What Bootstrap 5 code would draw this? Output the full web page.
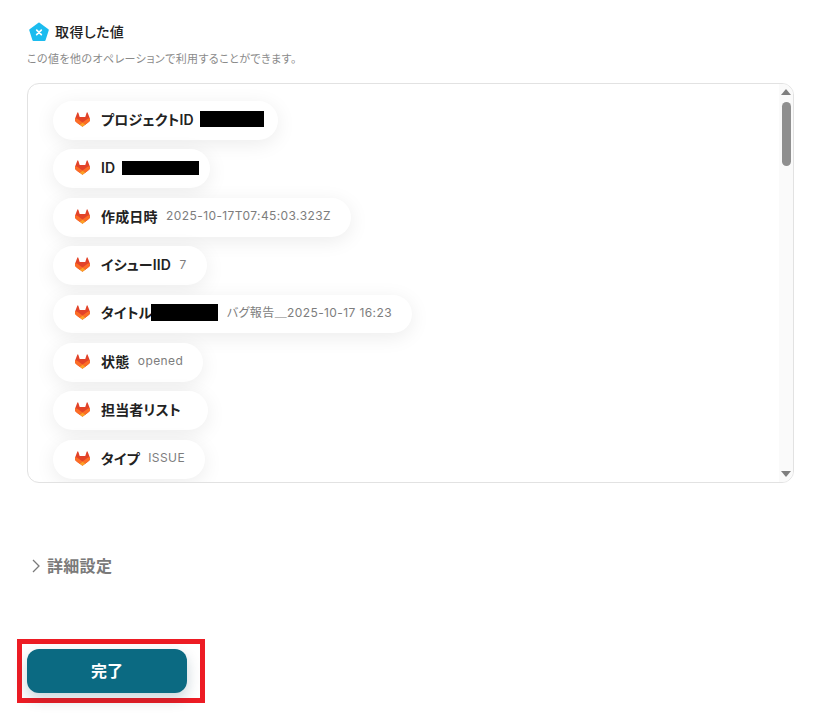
<!DOCTYPE html>
<html lang="ja">
<head>
    <title>取得した値</title>
    <link rel="stylesheet" href="https://cdn.jsdelivr.net/npm/bootstrap@5.3.0/dist/css/bootstrap.min.css">
    <style>
        body { font-family: Inter, "Noto Sans CJK JP", sans-serif; color: #2b2b2b; background: #fff; overflow: hidden; font-feature-settings: "palt"; }
        .page-wrap { width: 826px; height: 717px; padding: 21px 32px 0 27px; }
        .head-row { height: 21px; margin-left: 2px; gap: 6px; }
        .head-title { font-size: 14px; font-weight: 500; letter-spacing: .4px; color: #222; }
        .head-sub { font-size: 11px; letter-spacing: .42px; color: #8a8a8a; margin-top: 9px; line-height: 16px; }
        .value-box { height: 400px; margin-top: 16px; border: 1px solid #e2e2e2; border-radius: 12px; overflow: hidden; }
        .pill-list { padding: 17px 0 0 25px; gap: 9.6px; }
        .out-pill { height: 38.8px; padding: 0 20px 2px 22px; background: #fff; box-shadow: 0 4px 20px rgba(0,0,0,.08); }
        .out-name { font-size: 14px; font-weight: 600; letter-spacing: .15px; color: #222; margin-left: 11px; white-space: nowrap; }
        .out-val { font-size: 12px; letter-spacing: .4px; color: #7d7d7d; margin-left: 8.5px; white-space: nowrap; }
        .no-val { margin-right: 7px; }
        .black-bar { display: inline-block; background: #000; }
        .bar-a { width: 64px; height: 16px; margin: 0 -6px 0 6px; }
        .bar-b { width: 77px; height: 14px; margin: 0 -9px 0 7px; }
        .bar-c { width: 67px; height: 17px; margin-left: -1px; }
        .fake-scroll { width: 14px; background: #fafafa; padding-top: 5px; }
        .arrow-up { border: 5px solid transparent; border-top: 0; border-bottom: 6px solid #7f7f7f; }
        .arrow-down { border: 5px solid transparent; border-bottom: 0; border-top: 6px solid #7f7f7f; margin-bottom: 5px; }
        .scroll-thumb { width: 9px; height: 64px; margin-top: 7px; background: #8f8f8f; border-radius: 5px; }
        .more-row { margin: 72px 0 0 4px; height: 22px; gap: 6px; font-size: 16px; font-weight: 600; letter-spacing: .3px; color: #7a7a7a; }
        .mark-frame { width: 188px; height: 64px; margin: 62px 0 0 -10px; padding: 5px 13px 5px 5px; border: 5px solid #ed1c24; }
        .done-btn { width: 160px; height: 44px; padding: 0; background: #0b6a82; border-radius: 12px; color: #fff; font-size: 16px; font-weight: 700; box-shadow: 0 6px 14px rgba(11,60,80,.22); }
    </style>
</head>
<body>
    <svg width="0" height="0" class="d-block">
        <defs>
            <g id="tanuki">
                <path fill="#E24329" d="m24.507 9.5-.034-.09L21.082.562a.896.896 0 0 0-1.694.091l-2.29 7.01H7.825L5.535.653a.898.898 0 0 0-1.694-.09L.451 9.411.416 9.5a6.297 6.297 0 0 0 2.09 7.278l.012.01.03.022 5.16 3.867 2.56 1.935 1.554 1.176a1.051 1.051 0 0 0 1.268 0l1.555-1.176 2.56-1.935 5.197-3.89.014-.01A6.297 6.297 0 0 0 24.507 9.5Z"/>
                <path fill="#FC6D26" d="m24.507 9.5-.034-.09a11.44 11.44 0 0 0-4.56 2.051l-7.447 5.632 4.742 3.584 5.197-3.89.014-.01A6.297 6.297 0 0 0 24.507 9.5Z"/>
                <path fill="#FCA326" d="m7.707 20.677 2.56 1.935 1.555 1.176a1.051 1.051 0 0 0 1.268 0l1.555-1.176 2.56-1.935-4.743-3.584-4.755 3.584Z"/>
                <path fill="#FC6D26" d="M5.01 11.461a11.43 11.43 0 0 0-4.56-2.05L.416 9.5a6.297 6.297 0 0 0 2.09 7.278l.012.01.03.022 5.16 3.867 4.745-3.584-7.444-5.632Z"/>
            </g>
        </defs>
    </svg>

    <div class="page-wrap">
        <div class="head-row d-flex align-items-center">
            <svg width="20" height="20" viewBox="0 0 20 20">
                <path fill="#1cbcef" stroke="#1cbcef" stroke-width="2" stroke-linejoin="round" d="M10 1.5 18.8 8 15.6 18H4.4L1.2 8Z"/>
                <path fill="none" stroke="#fff" stroke-width="1.7" stroke-linecap="round" d="M7.7 8.2 12.3 12.6M12.3 8.2 7.7 12.6"/>
            </svg>
            <span class="head-title">取得した値</span>
        </div>
        <div class="head-sub">この値を他のオペレーションで利用することができます。</div>

        <div class="value-box d-flex justify-content-between">
            <div class="pill-list d-flex flex-column align-items-start">
                <div class="out-pill d-flex align-items-center rounded-pill">
                    <svg width="15" height="15" viewBox="0 0 25 24"><use href="#tanuki"/></svg>
                    <span class="out-name">プロジェクトID</span><span class="black-bar bar-a"></span>
                </div>
                <div class="out-pill d-flex align-items-center rounded-pill">
                    <svg width="15" height="15" viewBox="0 0 25 24"><use href="#tanuki"/></svg>
                    <span class="out-name">ID</span><span class="black-bar bar-b"></span>
                </div>
                <div class="out-pill d-flex align-items-center rounded-pill">
                    <svg width="15" height="15" viewBox="0 0 25 24"><use href="#tanuki"/></svg>
                    <span class="out-name">作成日時</span><span class="out-val">2025-10-17T07:45:03.323Z</span>
                </div>
                <div class="out-pill d-flex align-items-center rounded-pill">
                    <svg width="15" height="15" viewBox="0 0 25 24"><use href="#tanuki"/></svg>
                    <span class="out-name">イシューIID</span><span class="out-val">7</span>
                </div>
                <div class="out-pill d-flex align-items-center rounded-pill">
                    <svg width="15" height="15" viewBox="0 0 25 24"><use href="#tanuki"/></svg>
                    <span class="out-name">タイトル</span><span class="black-bar bar-c"></span><span class="out-val">バグ報告＿2025-10-17 16:23</span>
                </div>
                <div class="out-pill d-flex align-items-center rounded-pill">
                    <svg width="15" height="15" viewBox="0 0 25 24"><use href="#tanuki"/></svg>
                    <span class="out-name">状態</span><span class="out-val">opened</span>
                </div>
                <div class="out-pill d-flex align-items-center rounded-pill">
                    <svg width="15" height="15" viewBox="0 0 25 24"><use href="#tanuki"/></svg>
                    <span class="out-name no-val">担当者リスト</span>
                </div>
                <div class="out-pill d-flex align-items-center rounded-pill">
                    <svg width="15" height="15" viewBox="0 0 25 24"><use href="#tanuki"/></svg>
                    <span class="out-name">タイプ</span><span class="out-val">ISSUE</span>
                </div>
            </div>
            <div class="fake-scroll d-flex flex-column align-items-center flex-shrink-0">
                <span class="arrow-up"></span>
                <span class="scroll-thumb"></span>
                <span class="arrow-down mt-auto"></span>
            </div>
        </div>

        <div class="more-row d-flex align-items-center">
            <svg width="10" height="14" viewBox="0 0 10 14"><path fill="none" stroke="#7a7a7a" stroke-width="1.3" d="M2 1 8 7 2 13"/></svg>
            <span>詳細設定</span>
        </div>

        <div class="mark-frame">
            <button type="button" class="btn done-btn border-0">完了</button>
        </div>
    </div>

    <script src="https://cdn.jsdelivr.net/npm/bootstrap@5.3.0/dist/js/bootstrap.bundle.min.js"></script>
</body>
</html>
